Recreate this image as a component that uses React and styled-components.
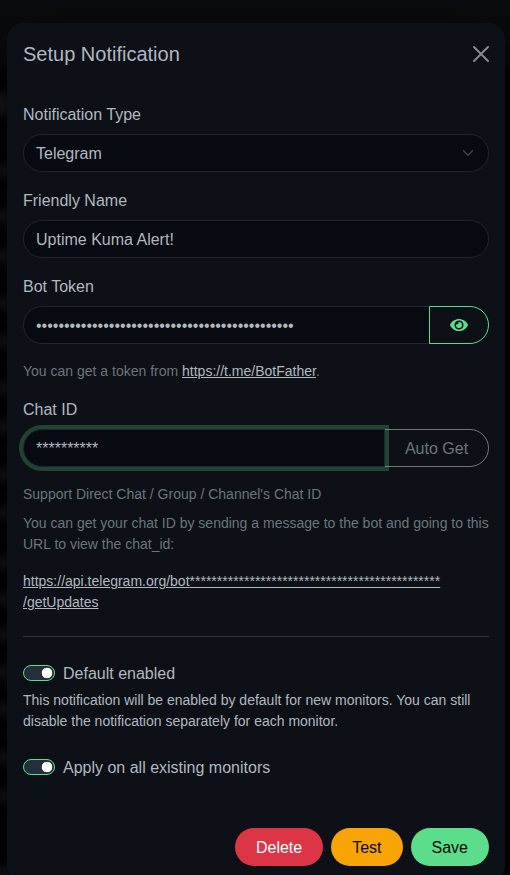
import React, { useState } from 'react'
import styled, { createGlobalStyle } from 'styled-components'

const BOT_TOKEN = '0'.repeat(46)

function App() {
    const [type, setType] = useState('telegram')
    const [name, setName] = useState('Uptime Kuma Alert!')
    const [token, setToken] = useState(BOT_TOKEN)
    const [chatId, setChatId] = useState('**********')
    const [showToken, setShowToken] = useState(false)
    const [isDefault, setIsDefault] = useState(true)
    const [applyExisting, setApplyExisting] = useState(true)

    return (
        <React.Fragment>
            <GlobalStyle />
            <Page>
                <Blurred aria-hidden="true">
                    <Smudge $large style={{ top: 92 }} />
                    {smudges.map((top) => <Smudge key={top} style={{ top }} />)}
                </Blurred>
                <Modal>
                    <Header>
                        <Title>Setup Notification</Title>
                        <CloseButton aria-label="Close">
                            <svg width="16" height="16" viewBox="0 0 16 16" fill="#fff">
                                <path d="M.293.293a1 1 0 0 1 1.414 0L8 6.586 14.293.293a1 1 0 1 1 1.414 1.414L9.414 8l6.293 6.293a1 1 0 0 1-1.414 1.414L8 9.414l-6.293 6.293a1 1 0 0 1-1.414-1.414L6.586 8 .293 1.707a1 1 0 0 1 0-1.414z" />
                            </svg>
                        </CloseButton>
                    </Header>
                    <Body>
                        <Field>
                            <Label htmlFor="type">Notification Type</Label>
                            <SelectWrap>
                                <Select id="type" value={type} onChange={(e) => setType(e.target.value)}>
                                    <option value="telegram">Telegram</option>
                                </Select>
                                <Chevron width="16" height="12" viewBox="0 0 16 16" fill="none">
                                    <path d="m2 5 6 6 6-6" stroke="#3d434a" strokeWidth="2" strokeLinecap="round" strokeLinejoin="round" />
                                </Chevron>
                            </SelectWrap>
                        </Field>
                        <Field>
                            <Label htmlFor="name">Friendly Name</Label>
                            <Input id="name" value={name} onChange={(e) => setName(e.target.value)} />
                        </Field>
                        <Field>
                            <Label htmlFor="token">Bot Token</Label>
                            <InputGroup>
                                <Input id="token" $joined type={showToken ? 'text' : 'password'} value={token} onChange={(e) => setToken(e.target.value)} />
                                <OutlineButton $color="#5cdd8b" $width="60px" aria-label="Show token" onClick={() => setShowToken(!showToken)}>
                                    <svg width="18" height="16" viewBox="0 0 576 512" fill="currentColor">
                                        <path d="M572.52 241.4C518.29 135.59 410.93 64 288 64S57.68 135.64 3.48 241.41a32.35 32.35 0 0 0 0 29.19C57.71 376.41 165.07 448 288 448s230.32-71.64 284.52-177.41a32.35 32.35 0 0 0 0-29.19zM288 400a144 144 0 1 1 144-144 143.93 143.93 0 0 1-144 144zm0-240a95.31 95.31 0 0 0-25.31 3.79 47.85 47.85 0 0 1-66.9 66.9A95.78 95.78 0 1 0 288 160z" />
                                    </svg>
                                </OutlineButton>
                            </InputGroup>
                            <Hint>You can get a token from <Link href="#">https://t.me/BotFather</Link>.</Hint>
                        </Field>
                        <Field>
                            <Label htmlFor="chat">Chat ID</Label>
                            <InputGroup>
                                <Input id="chat" $joined $focused value={chatId} onChange={(e) => setChatId(e.target.value)} />
                                <OutlineButton $text $color="#6c757d" $width="105px">Auto Get</OutlineButton>
                            </InputGroup>
                            <Hint>
                                Support Direct Chat / Group / Channel's Chat ID
                                <HintText>You can get your chat ID by sending a message to the bot and going to this URL to view the chat_id:</HintText>
                                <UrlText>
                                    <Link href="#">https://api.telegram.org/bot{'*'.repeat(46)}<wbr />/getUpdates</Link>
                                </UrlText>
                            </Hint>
                        </Field>
                        <Divider />
                        <SwitchRow>
                            <Switch checked={isDefault} onChange={() => setIsDefault(!isDefault)} />
                            <SwitchLabel>Default enabled</SwitchLabel>
                        </SwitchRow>
                        <Description>
                            This notification will be enabled by default for new monitors. You can still disable the notification separately for each monitor.
                        </Description>
                        <SwitchRow>
                            <Switch checked={applyExisting} onChange={() => setApplyExisting(!applyExisting)} />
                            <SwitchLabel>Apply on all existing monitors</SwitchLabel>
                        </SwitchRow>
                    </Body>
                    <Footer>
                        <Button $bg="#dc3545" $color="#fff">Delete</Button>
                        <Button $bg="#f8a306" $color="#020b05">Test</Button>
                        <Button $bg="#5cdd8b" $color="#020b05">Save</Button>
                    </Footer>
                </Modal>
            </Page>
        </React.Fragment>
    )
}

export default App

// vertical positions of the blurred list rows behind the dialog
const smudges = [165, 210, 250, 297, 335, 382, 420, 468, 507, 556, 593, 628, 666, 704, 752, 790, 866]

const GlobalStyle = createGlobalStyle`
* {
    box-sizing: border-box;
}
body {
    margin: 0;
    overflow: hidden;
    background: #000;
    color: #b1b8c0;
    font: 16px/1.5 "Liberation Sans", Arial, sans-serif;
}
button, input, select {
    font: inherit;
}
`

const Page = styled.div`
position: relative;
height: 875px;
padding: 23px 5px 0 7px;
overflow: hidden;
background: linear-gradient(#090b0e 0, #07090c 64px, #020304 72px, #020304 100%);
`

const Blurred = styled.div`
position: absolute;
inset: 0;
`

const Smudge = styled.div`
position: absolute;
left: ${(props) => props.$large ? "-4px" : "-2px"};
width: 12px;
height: ${(props) => props.$large ? "24px" : "12px"};
border-radius: 5px;
background: #17191b;
filter: blur(4px);
`

const Modal = styled.div`
position: relative;
height: 859px;
border-radius: 16px;
background: #0d1117;
box-shadow: 0 15px 70px rgba(0, 0, 0, 0.4);
`

const Header = styled.div`
display: flex;
align-items: center;
justify-content: space-between;
height: 62px;
padding: 0 16px;
`

const Title = styled.h5`
margin: 0;
font-size: 20px;
font-weight: 400;
line-height: 30px;
`

const CloseButton = styled.button`
display: flex;
padding: 0;
border: 0;
background: none;
opacity: 0.5;
cursor: pointer;
`

const Body = styled.div`
padding: 18px 16px 16px;
`

const Field = styled.div`
margin-bottom: 17px;
`

const Label = styled.label`
display: block;
height: 24px;
margin-bottom: 7px;
`

const Input = styled.input`
display: block;
flex: 1;
position: relative;
z-index: ${(props) => props.$focused ? 1 : 0};
width: 100%;
min-width: 0;
height: 38px;
padding: 7px 12px 5px;
border: 1px solid #1d2634;
border-radius: ${(props) => props.$joined ? "19px 0 0 19px" : "19px"};
outline: 0;
background: #070a10;
color: #b1b8c0;
box-shadow: ${(props) => props.$focused ? "0 0 0 4px rgba(92, 221, 139, 0.25)" : "none"};
`

const SelectWrap = styled.div`
position: relative;
`

const Select = styled(Input).attrs({ as: 'select' })`
appearance: none;
`

const Chevron = styled.svg`
position: absolute;
top: 13px;
right: 13px;
z-index: 1;
pointer-events: none;
`

const InputGroup = styled.div`
display: flex;
margin-bottom: 17px;
`

const OutlineButton = styled.button`
display: flex;
align-items: center;
justify-content: center;
position: relative;
width: ${(props) => props.$width};
height: 38px;
margin-left: -1px;
padding: ${(props) => props.$text ? "2px 0 0" : "0"};
border: 1px solid ${(props) => props.$color};
border-radius: 0 19px 19px 0;
background: none;
color: ${(props) => props.$color};
cursor: pointer;
`

const Hint = styled.div`
margin-bottom: -1px;
color: #6c757d;
font-size: 14px;
line-height: 21px;
`

const HintText = styled.p`
margin: 8px 0 16px;
`

const UrlText = styled.p`
margin: 0;
`

const Link = styled.a`
color: #b1b8c0;
text-decoration: underline;
`

const Divider = styled.hr`
margin: 24px 0;
border: 0;
border-top: 1px solid #2e333a;
`

const SwitchRow = styled.label`
display: flex;
align-items: center;
gap: 8px;
height: 24px;
`

const Switch = styled.input.attrs({ type: 'checkbox' })`
appearance: none;
width: 32px;
height: 16px;
margin: 0;
border: 1px solid #5cdd8b;
border-radius: 16px;
background: radial-gradient(circle at ${(props) => props.checked ? "23px" : "7px"} 7px, #fff 5px, transparent 5.6px) #232f3b;
`

const SwitchLabel = styled.span`
padding-top: 2px;
`

const Description = styled.div`
margin: 5px 0 23px;
font-size: 14px;
line-height: 21px;
`

const Footer = styled.div`
display: flex;
justify-content: flex-end;
gap: 8px;
padding: 33px 16px 16px;
`

const Button = styled.button`
height: 38px;
padding: 2px 21px 0;
border: 0;
border-radius: 19px;
background: ${(props) => props.$bg};
color: ${(props) => props.$color};
cursor: pointer;
`
